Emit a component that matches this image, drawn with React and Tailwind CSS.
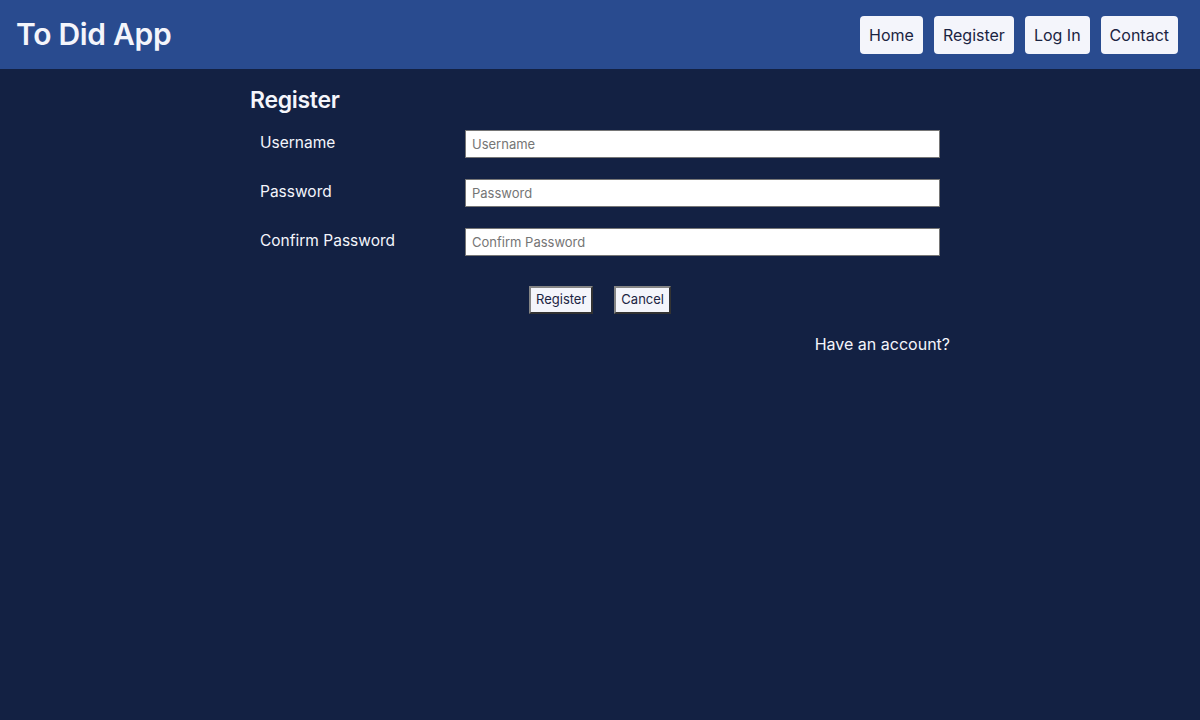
export default function App() {
  return (
    <div className="min-h-screen bg-[#132143] text-white" style={{ fontFamily: "Inter, 'Noto Sans', sans-serif" }}>
      <header className="flex h-[69px] items-center justify-between bg-[#294b8f] pl-4 pr-[22px]">
        <h1 className="text-[30px] font-semibold tracking-[-0.3px] text-[#f4f5fb]">To Did App</h1>
        <nav className="flex gap-[11px]">
          {["Home", "Register", "Log In", "Contact"].map((item) => (
            <button key={item} className="h-[38px] rounded-[4px] bg-[#f4f5fb] px-[9px] text-[16px] text-[#1b2442]">
              {item}
            </button>
          ))}
        </nav>
      </header>

      <main className="mx-auto w-[700px]">
        <h2 className="pt-[14px] text-[23px] font-semibold tracking-[-0.3px] text-[#f4f5fb]">Register</h2>
        <form className="mt-[12px] px-[10px]">
          {[
            ["Username", "Username", "text"],
            ["Password", "Password", "password"],
            ["Confirm Password", "Confirm Password", "password"],
          ].map(([label, placeholder, type]) => (
            <div key={label} className="mb-[21px] flex items-center">
              <label className="w-[205px] pb-[2px] text-[15.5px] text-[#f4f5fb]">{label}</label>
              <input
                type={type}
                placeholder={placeholder}
                className="h-[28px] flex-1 border border-[#767676] bg-white px-[6px] text-[13px] text-gray-800 placeholder:text-[#757575]"
              />
            </div>
          ))}
          <div className="mt-[30px] flex justify-center gap-[21px]">
            <button type="button" className="h-[28px] border-2 border-t-[#858585] border-l-[#858585] border-b-[#333] border-r-[#333] bg-[#f4f5fb] px-[5px] text-[13px] text-[#1b2442]">Register</button>
            <button type="button" className="h-[28px] border-2 border-t-[#858585] border-l-[#858585] border-b-[#333] border-r-[#333] bg-[#f4f5fb] px-[5px] text-[13px] text-[#1b2442]">Cancel</button>
          </div>
        </form>
        <p className="mt-[18px] text-right text-[16px] text-[#f4f5fb]">Have an account?</p>
      </main>
    </div>
  );
}
